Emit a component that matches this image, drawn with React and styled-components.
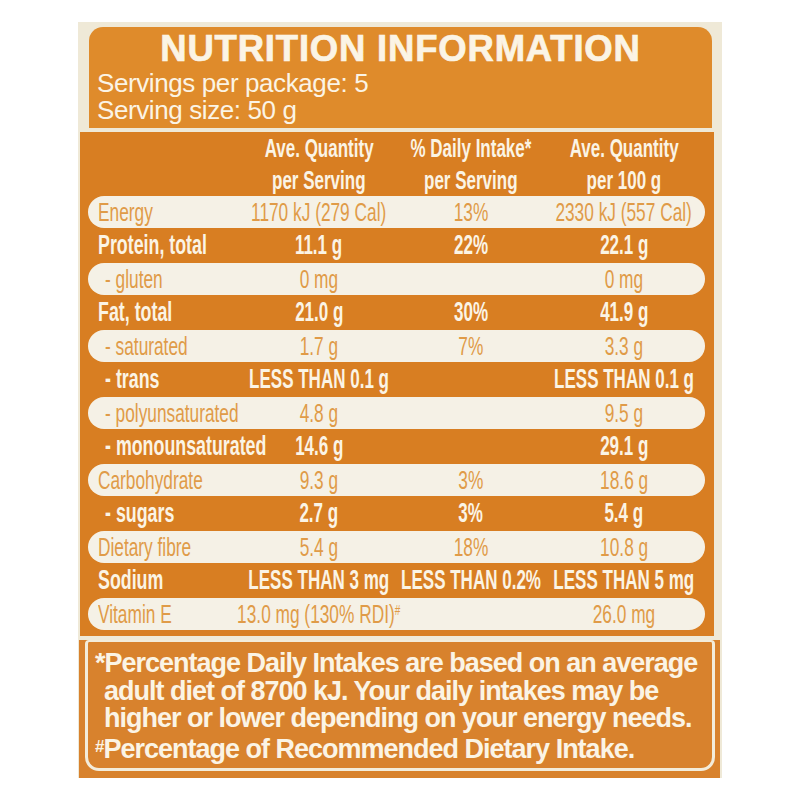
import React from 'react';
import styled, { createGlobalStyle } from 'styled-components';

const GlobalStyle = createGlobalStyle`
  html, body {
    margin: 0;
    padding: 0;
    background: #ffffff;
  }
`;

const SANS = `'Liberation Sans', Arial, sans-serif`;
const TEXT = '#fbf4e5';

const Page = styled.div`
  width: 800px;
  height: 800px;
  padding: 22px 0 0 78px;
  box-sizing: border-box;
  background: #ffffff;
`;

const Label = styled.div`
  width: 644px;
  height: 756px;
  box-sizing: border-box;
  padding-top: 5px;
  background: #efe9d7;
  display: flex;
  flex-direction: column;
  gap: 4px;
`;

const Header = styled.div`
  margin: 0 10px 0 11px;
  height: 101px;
  box-sizing: border-box;
  padding: 4px 0 0 8px;
  border-radius: 14px 14px 0 0;
  background: #df8b2b;
  color: ${TEXT};
`;

const Title = styled.div`
  font-family: ${SANS};
  font-weight: 900;
  font-size: 36.5px;
  line-height: 36px;
  letter-spacing: 0.8px;
  text-align: center;
  padding-right: 8px;
  margin-bottom: 2.5px;
  -webkit-text-stroke: 0.7px ${TEXT};
`;

const ServingLine = styled.div`
  font-family: ${SANS};
  font-size: 26px;
  line-height: 27.5px;
  letter-spacing: -0.4px;
`;

const Table = styled.div`
  margin: 0 8px 0 2px;
  height: 504px;
  box-sizing: border-box;
  padding-left: 8px;
  background: #d87e22;
  font-family: ${SANS};
`;

const HeadRow = styled.div`
  display: flex;
  height: 64px;
  padding-left: 155px;
  color: ${TEXT};
  font-weight: bold;
  font-size: 25px;
  line-height: 32px;
`;

const HeadCell = styled.div`
  width: ${(p) => p.$w}px;
  display: flex;
  flex-direction: column;
  align-items: center;
  white-space: nowrap;
`;

const Cond = styled.span`
  display: inline-block;
  transform: scaleX(${(p) => p.$k || 0.68});
  transform-origin: ${(p) => (p.$left ? 'left center' : 'center')};
`;

const Row = styled.div`
  display: flex;
  align-items: center;
  width: 617px;
  height: ${(p) => (p.$pill ? 32 : 35)}px;
  border-radius: 16px;
  background: ${(p) => (p.$pill ? '#f5f1e6' : 'transparent')};
  color: ${(p) => (p.$pill ? '#e09b48' : TEXT)};
  font-weight: ${(p) => (p.$pill ? 'normal' : 'bold')};
  font-size: ${(p) => (p.$pill ? 26 : 27)}px;
  white-space: nowrap;
`;

const NameCell = styled.div`
  width: ${(p) => (p.$sub ? 138 : 145)}px;
  padding-left: ${(p) => (p.$sub ? 17 : 10)}px;
`;

const ValueCell = styled.div`
  width: ${(p) => p.$w}px;
  display: flex;
  justify-content: center;
`;

const Sup = styled.span`
  font-size: 15px;
  position: relative;
  top: -8px;
`;

const Footer = styled.div`
  flex: 1;
  margin-left: 1px;
  margin-right: 2px;
  padding: 0 5px 7px 6px;
  background: #d8822d;
`;

const FootBox = styled.div`
  height: 100%;
  box-sizing: border-box;
  padding: 8px 0 0 0;
  border: 3px solid #f3ecda;
  border-top-width: 2px;
  border-radius: 4px 4px 14px 14px;
  color: ${TEXT};
  font-family: ${SANS};
  font-weight: bold;
  font-size: 27px;
  line-height: 27.7px;
  letter-spacing: -1px;
`;

const FootNote = styled.div`
  padding-left: 16px;
  text-indent: -9px;
`;

const Mark = styled.span`
  font-size: 17px;
  vertical-align: 6px;
`;

const COLS = [152, 152, 154];

const rows = [
  ['Energy', '1170 kJ (279 Cal)', '13%', '2330 kJ (557 Cal)'],
  ['Protein, total', '11.1 g', '22%', '22.1 g'],
  ['- gluten', '0 mg', '', '0 mg', true],
  ['Fat, total', '21.0 g', '30%', '41.9 g'],
  ['- saturated', '1.7 g', '7%', '3.3 g', true],
  ['- trans', 'LESS THAN 0.1 g', '', 'LESS THAN 0.1 g', true],
  ['- polyunsaturated', '4.8 g', '', '9.5 g', true],
  ['- monounsaturated', '14.6 g', '', '29.1 g', true],
  ['Carbohydrate', '9.3 g', '3%', '18.6 g'],
  ['- sugars', '2.7 g', '3%', '5.4 g', true],
  ['Dietary fibre', '5.4 g', '18%', '10.8 g'],
  ['Sodium', 'LESS THAN 3 mg', 'LESS THAN 0.2%', 'LESS THAN 5 mg'],
  [
    'Vitamin E',
    <>
      13.0 mg (130% RDI)<Sup>#</Sup>
    </>,
    '',
    '26.0 mg',
  ],
];

export default function App() {
  return (
    <Page>
      <GlobalStyle />
      <Label>
        <Header>
          <Title>NUTRITION INFORMATION</Title>
          <ServingLine>Servings per package: 5</ServingLine>
          <ServingLine>Serving size: 50 g</ServingLine>
        </Header>

        <Table>
          <HeadRow>
            <HeadCell $w={COLS[0]}>
              <Cond $k={0.68}>Ave. Quantity</Cond>
              <Cond $k={0.68}>per Serving</Cond>
            </HeadCell>
            <HeadCell $w={COLS[1]}>
              <Cond $k={0.68}>% Daily Intake*</Cond>
              <Cond $k={0.68}>per Serving</Cond>
            </HeadCell>
            <HeadCell $w={COLS[2]}>
              <Cond $k={0.68}>Ave. Quantity</Cond>
              <Cond $k={0.68}>per 100 g</Cond>
            </HeadCell>
          </HeadRow>
          {rows.map((r, index) => {
            const pill = index % 2 === 0;
            const k = pill ? 0.665 : 0.63;
            return (
              <Row key={index} $pill={pill}>
                <NameCell $sub={r[4]}>
                  <Cond $k={pill ? k : 0.66} $left>
                    {r[0]}
                  </Cond>
                </NameCell>
                {r.slice(1, 4).map((v, i) => (
                  <ValueCell key={i} $w={COLS[i]}>
                    {v && <Cond $k={k}>{v}</Cond>}
                  </ValueCell>
                ))}
              </Row>
            );
          })}
        </Table>

        <Footer>
          <FootBox>
            <FootNote>
              *Percentage Daily Intakes are based on an average adult diet of 8700 kJ. Your daily intakes may be
              higher or lower depending on your energy needs.
            </FootNote>
            <FootNote>
              <Mark>#</Mark>Percentage of Recommended Dietary Intake.
            </FootNote>
          </FootBox>
        </Footer>
      </Label>
    </Page>
  );
}
